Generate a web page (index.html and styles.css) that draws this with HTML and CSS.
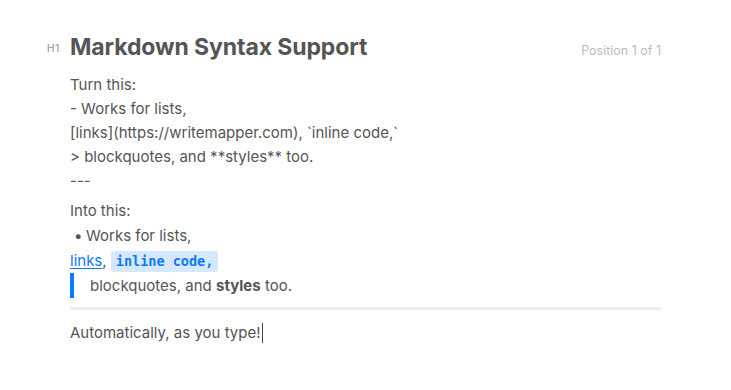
FILE: index.html
```html
<!DOCTYPE html>
<html>
<head>
<meta charset="utf-8">
<link rel="stylesheet" href="styles.css">
</head>
<body>
<main class="doc">
  <header class="head">
    <span class="level">H1</span>
    <h1 class="title">Markdown Syntax Support</h1>
    <span class="pos">Position 1 of 1</span>
  </header>
  <section class="body">
    <p class="line">Turn this:</p>
    <p class="line">- Works for lists,</p>
    <p class="line">[links](https://writemapper.com), `inline code,`</p>
    <p class="line">&gt; blockquotes, and **styles** too.</p>
    <p class="line">---</p>
    <p class="line l2 into">Into this:</p>
    <p class="line l2 bullet"><span class="dot">•</span>Works for lists,</p>
    <p class="line l2"><a class="link" href="#">links</a>, <code class="code">inline code,</code></p>
    <blockquote class="quote">blockquotes, and <strong>styles</strong> too.</blockquote>
  </section>
  <hr class="sep">
  <p class="line last">Automatically, as you type!<span class="caret"></span></p>
</main>
</body>
</html>
```
FILE: styles.css
```css
html, body { margin: 0; padding: 0; background: #fff; }
body { font-family: Inter, "Noto Sans", sans-serif; color: #555; }
.doc { width: 591px; margin-left: 70px; padding-top: 33px; }
.head { display: flex; align-items: baseline; position: relative; height: 28px; }
.level { position: absolute; left: -23px; top: 9px; font-size: 10px; color: #aaa; font-weight: 600; letter-spacing: 0.6px; }
.title { margin: 0; font-size: 23px; font-weight: 700; color: #555; line-height: 28px; flex: 1; letter-spacing: -0.1px; }
.pos { font-size: 12.5px; color: #bbb; }
.body { margin-top: 12px; }
.line { margin: 0; font-size: 15px; line-height: 24px; height: 24px; }
.l2 { height: 25px; line-height: 25px; }
.into { margin-top: 5px; }
.bullet { padding-left: 4px; }
.dot { display: inline-block; width: 12px; }
.link { color: #0a7aff; text-decoration: underline; text-underline-offset: 2px; }
.code { font-family: "DejaVu Sans Mono", monospace; font-weight: bold; font-size: 13.5px; color: #0a7aff; background: #d6e8fd; border-radius: 3px; padding: 2px 5px 3px; }
.quote { margin: 0; border-left: 4px solid #0a7aff; padding-left: 16px; font-size: 15px; line-height: 25px; height: 25px; }
.quote strong { font-weight: 700; }
.sep { border: 0; height: 3px; background: #eee; margin: 9px 0 0; }
.last { margin-top: 11px; }
.caret { display: inline-block; width: 1px; height: 20px; background: #444; vertical-align: -5px; margin-left: 1px; }
```
